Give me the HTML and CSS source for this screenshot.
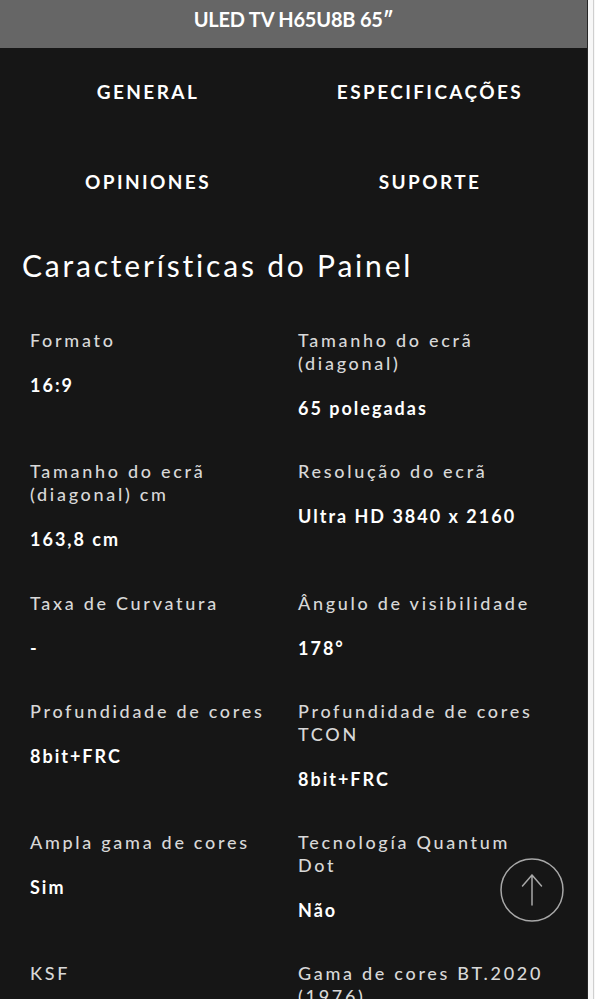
FILE: index.html
```html
<!DOCTYPE html>
<html lang="pt">
<head>
<meta charset="utf-8">
<title>ULED TV H65U8B 65″</title>
<link rel="stylesheet" href="styles.css">
</head>
<body>
<div class="screen">
  <main class="page">
    <header class="topbar">
      <h1 class="topbar-title">ULED TV H65U8B 65″</h1>
    </header>
    <nav class="tabs">
      <a class="tab" href="#">GENERAL</a>
      <a class="tab" href="#">ESPECIFICAÇÕES</a>
      <a class="tab" href="#">OPINIONES</a>
      <a class="tab" href="#">SUPORTE</a>
    </nav>
    <section class="specs">
      <h2 class="specs-title">Características do Painel</h2>
      <div class="spec-grid">
        <div class="spec"><div class="spec-label">Formato</div><div class="spec-value">16:9</div></div>
        <div class="spec"><div class="spec-label">Tamanho do ecrã (diagonal)</div><div class="spec-value">65 polegadas</div></div>
        <div class="spec"><div class="spec-label">Tamanho do ecrã (diagonal) cm</div><div class="spec-value">163,8 cm</div></div>
        <div class="spec"><div class="spec-label">Resolução do ecrã</div><div class="spec-value">Ultra HD 3840 x 2160</div></div>
        <div class="spec"><div class="spec-label">Taxa de Curvatura</div><div class="spec-value">-</div></div>
        <div class="spec"><div class="spec-label">Ângulo de visibilidade</div><div class="spec-value">178°</div></div>
        <div class="spec"><div class="spec-label">Profundidade de cores</div><div class="spec-value">8bit+FRC</div></div>
        <div class="spec"><div class="spec-label">Profundidade de cores TCON</div><div class="spec-value">8bit+FRC</div></div>
        <div class="spec"><div class="spec-label">Ampla gama de cores</div><div class="spec-value">Sim</div></div>
        <div class="spec"><div class="spec-label">Tecnología Quantum Dot</div><div class="spec-value">Não</div></div>
        <div class="spec"><div class="spec-label">KSF</div><div class="spec-value">Sim</div></div>
        <div class="spec"><div class="spec-label">Gama de cores BT.2020 (1976)</div><div class="spec-value">-</div></div>
      </div>
    </section>
  </main>
  <div class="track"></div>
</div>
<a class="to-top" href="#" aria-label="Voltar ao topo">
  <svg viewBox="0 0 64 64" width="64" height="64" aria-hidden="true">
    <circle cx="32" cy="32" r="31" fill="none" stroke="#a8a8a8" stroke-width="1.5"/>
    <path d="M32 17 V47 M22.5 28 L32 17 L41.5 28" fill="none" stroke="#a8a8a8" stroke-width="1.5" stroke-linecap="round" stroke-linejoin="round"/>
  </svg>
</a>
</body>
</html>
```

FILE: styles.css
```css
html, body {
  margin: 0;
  padding: 0;
  height: 100%;
  overflow: hidden;
  background: #f7f7f7;
}

body {
  font-family: "Lato", "Liberation Sans", sans-serif;
  -webkit-font-smoothing: antialiased;
}

.screen {
  display: flex;
  height: 100%;
}

.page {
  width: 587px;
  flex: none;
  background: #161616;
  color: #fff;
  min-height: 100%;
}

.track {
  width: 8px;
  flex: none;
  display: flex;
  justify-content: flex-end;
  padding-right: 1px;
  box-sizing: border-box;
  background: #f7f7f7;
  border-left: 1px solid #262626;
}
.track::after {
  content: "";
  width: 1px;
  background: #cfcfcf;
}

.topbar {
  height: 48px;
  box-sizing: border-box;
  padding-top: 6px;
  background: #666666;
  text-align: center;
}
.topbar-title {
  margin: 0;
  font-size: 20px;
  line-height: 26px;
  font-weight: 700;
  letter-spacing: -0.2px;
  color: #fff;
}

.tabs {
  display: grid;
  grid-template-columns: 1fr 1fr;
  grid-auto-rows: 90px;
  padding: 0 16px 0 7px;
}
.tab {
  display: flex;
  align-items: center;
  justify-content: center;
  padding-bottom: 4px;
  color: #fff;
  text-decoration: none;
  font-size: 19px;
  font-weight: 700;
  letter-spacing: 2.4px;
}

.specs {
  padding: 19px 0 0 0;
}
.specs-title {
  margin: 0 0 46px 22px;
  font-size: 30px;
  line-height: 36px;
  font-weight: 400;
  letter-spacing: 2.8px;
  color: #fff;
}

.spec-grid {
  display: grid;
  grid-template-columns: 268px 248px;
  row-gap: 40.3px;
  padding-left: 30px;
}
.spec-label {
  font-size: 18px;
  line-height: 23px;
  font-weight: 500;
  letter-spacing: 2.7px;
  color: #d8d8d8;
}
.spec-value {
  margin-top: 22px;
  font-size: 18px;
  line-height: 23px;
  font-weight: 700;
  letter-spacing: 2px;
  color: #fff;
}

.to-top {
  position: fixed;
  left: 500px;
  top: 858px;
  width: 64px;
  height: 64px;
  display: block;
}
.to-top svg {
  display: block;
}
```
